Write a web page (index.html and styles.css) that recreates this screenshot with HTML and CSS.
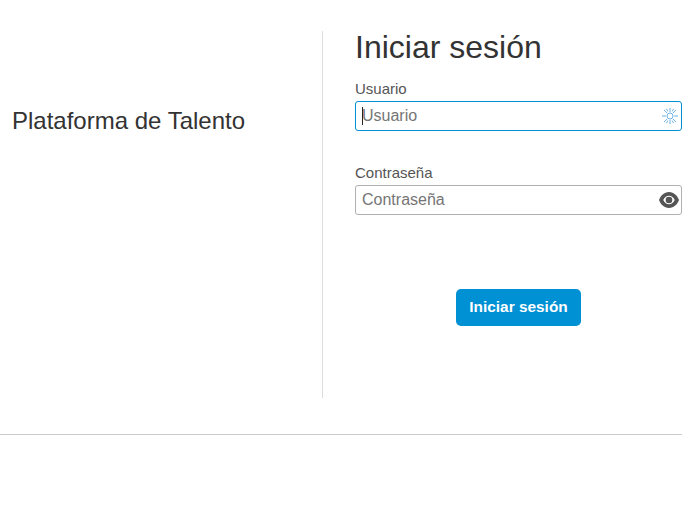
FILE: index.html
```html
<!DOCTYPE html>
<html lang="es">
<head>
    <meta charset="UTF-8">
    <meta name="viewport" content="width=device-width, initial-scale=1.0">
    <title>Plataforma de Talento</title>
    <link rel="stylesheet" href="styles.css">
</head>
<body>
    <div class="container">
        <div class="main">
            <div class="brand">
                <h2>Plataforma de Talento</h2>
            </div>
            <form class="login">
                <h1>Iniciar sesión</h1>
                <div class="field">
                    <label for="usuario">Usuario</label>
                    <div class="input-wrap">
                        <input type="text" id="usuario" class="focused" placeholder="Usuario">
                        <span class="caret"></span>
                        <svg class="icon icon-sun" width="18" height="18" viewBox="0 0 18 18" fill="none" stroke="#6fb3e6" stroke-width="1">
                            <circle cx="9" cy="9" r="3"/>
                            <path d="M9 1v4M9 13v4M1 9h4M13 9h4M3 3l3 3M12 12l3 3M15 3l-3 3M6 12l-3 3M5.500 1.800l1.200 2.600M11.300 13.600l1.200 2.600M12.500 1.800l-1.200 2.600M6.700 13.600l-1.200 2.600"/>
                        </svg>
                    </div>
                </div>
                <div class="field">
                    <label for="contrasena">Contraseña</label>
                    <div class="input-wrap">
                        <input type="password" id="contrasena" placeholder="Contraseña">
                        <svg class="icon icon-eye" width="20" height="18" viewBox="0 0 20 18">
                            <path fill="#555" fill-rule="evenodd" d="M10 1C5 1 1.600 4.800 0 9c1.600 4.200 5 8 10 8s8.400-3.800 10-8c-1.600-4.200-5-8-10-8zM10 4.800c2.600 0 4.600 1.800 5.700 4.200-1.100 2.400-3.100 4.200-5.700 4.200S5.400 11.400 4.300 9C5.400 6.600 7.400 4.800 10 4.800z"/>
                            <circle cx="10" cy="9" r="3.300" fill="#555"/>
                        </svg>
                    </div>
                </div>
                <div class="actions">
                    <button type="button">Iniciar sesión</button>
                </div>
            </form>
        </div>
        <div class="footer"></div>
    </div>
</body>
</html>
```

FILE: styles.css
```css
body {
    margin: 0;
    background: #fff;
    font-family: "Liberation Sans", Arial, sans-serif;
    color: #333;
}
.container {
    width: 682px;
}
.main {
    display: flex;
    padding-top: 31px;
}
.brand {
    width: 322px;
    padding: 76px 0 0 12px;
    box-sizing: border-box;
}
.brand h2 {
    margin: 0;
    font-size: 24px;
    line-height: 28px;
    font-weight: normal;
}
.login {
    flex: 1;
    height: 367px;
    box-sizing: border-box;
    border-left: 1px solid #ddd;
    padding-left: 32px;
}
.login h1 {
    margin: 0 0 15px;
    font-size: 32px;
    line-height: 33px;
    font-weight: normal;
}
.field {
    margin-bottom: 32px;
}
label {
    display: block;
    font-size: 15px;
    line-height: 20px;
    margin-bottom: 2px;
    color: #555;
}
.input-wrap {
    position: relative;
}
input {
    display: block;
    width: 100%;
    height: 30px;
    box-sizing: border-box;
    padding: 0 30px 0 6px;
    border: 1px solid #b0b0b0;
    border-radius: 3px;
    font-family: inherit;
    font-size: 16px;
    color: #333;
    outline: none;
}
input::placeholder {
    color: #757575;
    opacity: 1;
}
input.focused {
    border-color: #0090d4;
}
.caret {
    position: absolute;
    left: 7px;
    top: 6px;
    width: 1px;
    height: 18px;
    background: #222;
}
.icon {
    position: absolute;
}
.icon-sun {
    right: 3px;
    top: 6px;
}
.icon-eye {
    right: 3px;
    top: 6px;
}
.actions {
    display: flex;
    justify-content: center;
    margin-top: 74px;
}
button {
    width: 125px;
    height: 37px;
    padding: 0 0 2px;
    border: none;
    border-radius: 5px;
    background: #0090d4;
    color: #fff;
    font-family: inherit;
    font-size: 15.4px;
    font-weight: bold;
}
.footer {
    margin-top: 36px;
    border-top: 1px solid #ccc;
}
```
